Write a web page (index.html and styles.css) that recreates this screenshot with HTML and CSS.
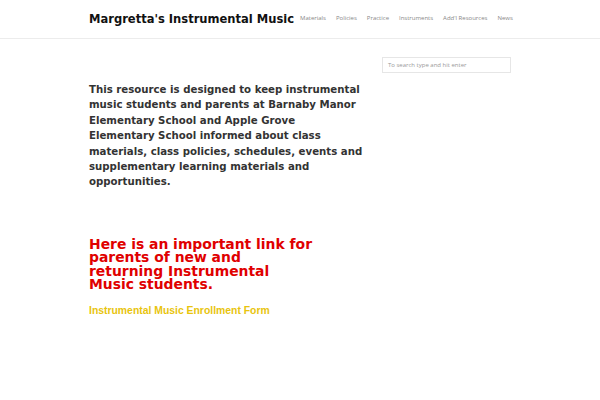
FILE: index.html
```html
<!DOCTYPE html>
<html>
<head>
<meta charset="utf-8">
<link rel="stylesheet" href="styles.css">
</head>
<body>
<header class="site-header">
  <div class="wrap header-inner">
    <div class="site-title">Margretta's Instrumental Music</div>
    <nav class="nav">
      <a>Materials</a>
      <a>Policies</a>
      <a>Practice</a>
      <a>Instruments</a>
      <a>Add'l Resources</a>
      <a>News</a>
    </nav>
  </div>
</header>
<div class="wrap main">
  <div class="content">
    <p class="intro">This resource is designed to keep instrumental music students and parents at Barnaby Manor Elementary School and Apple Grove<br>Elementary School informed about class materials, class policies, schedules, events and supplementary learning materials and opportunities.</p>
    <h2 class="important">Here is an important link for parents of new and returning Instrumental Music students.</h2>
    <a class="enroll">Instrumental Music Enrollment Form</a>
  </div>
  <aside class="sidebar">
    <div class="search">To search type and hit enter</div>
  </aside>
</div>
</body>
</html>
```
FILE: styles.css
```css
html, body {
  margin: 0;
  padding: 0;
  background: #fff;
}
body {
  font-family: "DejaVu Sans", sans-serif;
  color: #333;
}
.wrap {
  margin-left: 89px;
  width: 422px;
}
.site-header {
  border-bottom: 1px solid #ececec;
  height: 38px;
}
.header-inner {
  display: flex;
  align-items: center;
  height: 38px;
}
.site-title {
  font-family: "DejaVu Sans Condensed", "DejaVu Sans", sans-serif;
  font-stretch: condensed;
  font-weight: bold;
  font-size: 12.8px;
  color: #111;
  white-space: nowrap;
  margin-top: -2px;
}
.nav {
  display: flex;
  margin-left: 6px;
  margin-top: -3px;
}
.nav a {
  font-family: "Open Sans", sans-serif;
  font-size: 6px;
  color: #888;
  margin-right: 10px;
  white-space: nowrap;
}
.main {
  display: flex;
  justify-content: space-between;
  padding-top: 17px;
}
.content {
  width: 276px;
}
.intro {
  font-weight: bold;
  font-size: 10.2px;
  line-height: 15.4px;
  margin: 26px 0 0 0;
  color: #333;
}
.important {
  font-weight: bold;
  font-size: 13.9px;
  line-height: 13.5px;
  color: #e00000;
  width: 228px;
  margin: 48px 0 0 0;
}
.enroll {
  display: block;
  font-family: "Liberation Sans", Arial, sans-serif;
  font-weight: bold;
  font-size: 10.4px;
  color: #e8c40e;
  margin-top: 13px;
}
.sidebar {
  width: 129px;
}
.search {
  box-sizing: border-box;
  height: 16px;
  border: 1px solid #e6e6e6;
  font-family: "Open Sans", sans-serif;
  font-size: 6px;
  color: #999;
  padding: 3px 5px;
  line-height: 8px;
  margin-top: 1px;
}
```
